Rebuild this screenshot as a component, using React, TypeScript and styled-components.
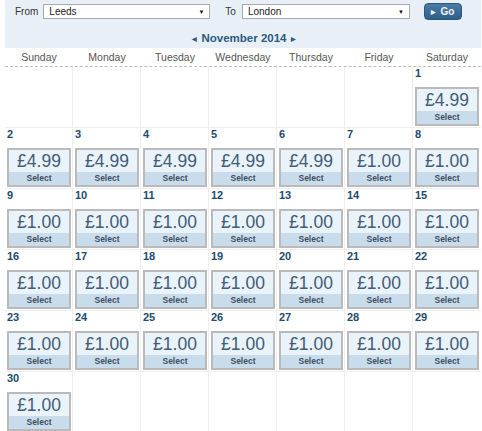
import React from 'react';
import styled, { createGlobalStyle } from 'styled-components';

const GlobalStyle = createGlobalStyle`
  body {
    margin: 0;
    background: #ffffff;
    font-family: "Liberation Sans", Arial, sans-serif;
  }
`;

const Page = styled.div`
  width: 476px;
  padding-left: 5px;
`;

const Header = styled.div`
  background: #e8eff7;
  height: 48px;
  box-sizing: border-box;
  padding: 3px 0 0 10px;
`;

const SearchRow = styled.div`
  display: flex;
  align-items: center;
  height: 17px;
`;

const Label = styled.span<{ $gap: number; $lead?: number }>`
  font-size: 10px;
  color: #333;
  margin-left: ${p => p.$lead ?? 0}px;
  margin-right: ${p => p.$gap}px;
`;

const FakeSelect = styled.div<{ $width: number }>`
  width: ${p => p.$width}px;
  height: 15px;
  box-sizing: border-box;
  border: 1px solid #a9a9a9;
  background: #fff;
  display: flex;
  align-items: center;
  justify-content: space-between;
  padding: 0 5px 0 5px;
  font-size: 10px;
  color: #222;
`;

const Arrow = styled.span`
  font-size: 6px;
  color: #111;
`;

const GoButton = styled.button`
  margin-left: 14px;
  width: 38px;
  height: 17px;
  border: 1px solid #2c587e;
  border-radius: 4px;
  background: linear-gradient(#4a7ca6, #2f5f88);
  color: #eef3f8;
  font-family: inherit;
  font-size: 10px;
  font-weight: bold;
  padding: 0;
  display: flex;
  align-items: center;
  justify-content: center;
  gap: 4px;
`;

const MonthNav = styled.div`
  display: flex;
  justify-content: center;
  align-items: center;
  gap: 4px;
  margin-top: 12px;
  margin-left: -8px;
  font-size: 11.5px;
  font-weight: bold;
  color: #2d5a80;
`;

const NavArrow = styled.span`
  font-size: 6px;
`;

const DayNames = styled.div`
  display: grid;
  grid-template-columns: repeat(7, 68px);
  height: 18px;
  border-bottom: 1px dashed #bbbbbb;
`;

const DayName = styled.div`
  font-size: 10.5px;
  color: #555;
  text-align: center;
  line-height: 18px;
`;

const Grid = styled.div`
  display: grid;
  grid-template-columns: repeat(7, 68px);
  grid-auto-rows: 61px;
`;

const Cell = styled.div<{ $last: boolean }>`
  box-sizing: border-box;
  padding: 0 0 0 2px;
  border-bottom: 1px solid #eeeeee;
  border-right: ${p => (p.$last ? 'none' : '1px solid #eeeeee')};
`;

const DayNumber = styled.div`
  font-size: 11px;
  font-weight: bold;
  color: #234b6e;
  line-height: 13px;
  height: 13px;
  margin-bottom: 7px;
`;

const PriceBox = styled.div`
  width: 64px;
  height: 39px;
  box-sizing: border-box;
  border: 2px solid #bababa;
  display: flex;
  flex-direction: column;
`;

const Price = styled.div`
  flex: 1;
  background: #eaf2fa;
  color: #415c76;
  font-size: 17.5px;
  text-align: center;
  line-height: 22px;
`;

const SelectStrip = styled.div`
  height: 13px;
  background: #c9dcec;
  color: #3f4f5f;
  font-size: 8.5px;
  font-weight: bold;
  text-align: center;
  line-height: 13px;
`;

const days = ['Sunday', 'Monday', 'Tuesday', 'Wednesday', 'Thursday', 'Friday', 'Saturday'];

const priceFor = (d: number) => (d <= 6 ? '£4.99' : '£1.00');

const App = () => {
    const cells: (number | null)[] = [];
    for (let i = 0; i < 6; i++) cells.push(null);
    for (let d = 1; d <= 30; d++) cells.push(d);
    while (cells.length % 7 !== 0) cells.push(null);

    return (
        <Page>
            <GlobalStyle />
            <Header>
                <SearchRow>
                    <Label $gap={5}>From</Label>
                    <FakeSelect $width={167}>
                        Leeds <Arrow>▼</Arrow>
                    </FakeSelect>
                    <Label $gap={6} $lead={15}>To</Label>
                    <FakeSelect $width={168}>
                        London <Arrow>▼</Arrow>
                    </FakeSelect>
                    <GoButton type="button">
                        <NavArrow>▶</NavArrow> Go
                    </GoButton>
                </SearchRow>
                <MonthNav>
                    <NavArrow>◀</NavArrow>
                    November 2014
                    <NavArrow>▶</NavArrow>
                </MonthNav>
            </Header>

            <DayNames>
                {days.map(name => <DayName key={name}>{name}</DayName>)}
            </DayNames>

            <Grid>
                {cells.map((d, i) => (
                    <Cell key={i} $last={i % 7 === 6}>
                        {d !== null && (
                            <>
                                <DayNumber>{d}</DayNumber>
                                <PriceBox>
                                    <Price>{priceFor(d)}</Price>
                                    <SelectStrip>Select</SelectStrip>
                                </PriceBox>
                            </>
                        )}
                    </Cell>
                ))}
            </Grid>
        </Page>
    );
};

export default App;
